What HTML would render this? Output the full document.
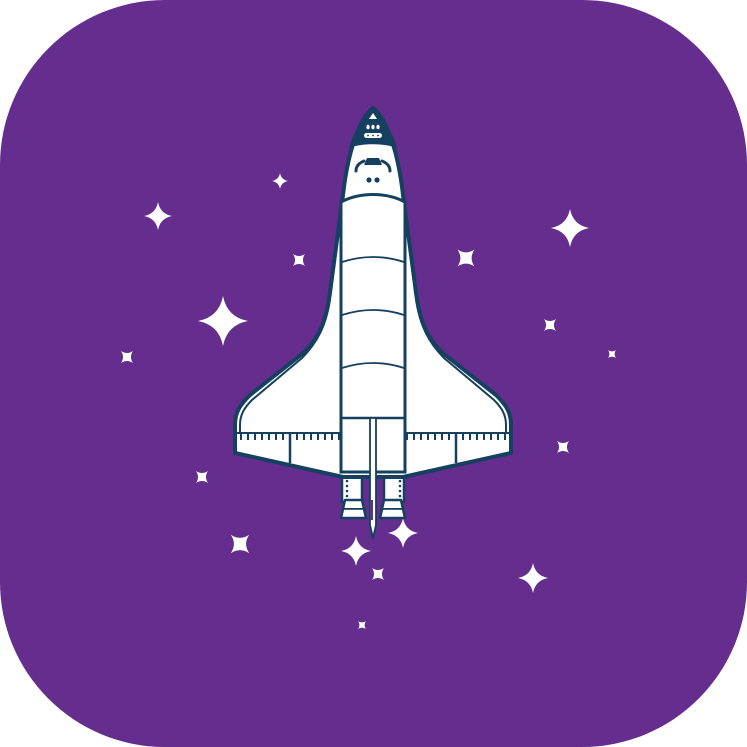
<!DOCTYPE html>
<html><head><style>html,body{margin:0;padding:0;background:#fff}svg{display:block}</style></head>
<body>
<svg width="747" height="747" viewBox="0 0 747 747" xmlns="http://www.w3.org/2000/svg">
<defs>
<path id="st" d="M0,-10 Q1.6,-1.6 10,0 Q1.6,1.6 0,10 Q-1.6,1.6 -10,0 Q-1.6,-1.6 0,-10Z" fill="#fff"/>
</defs>
<rect x="0" y="0" width="747" height="747" rx="165" fill="#652D8E"/>
<!-- stars -->
<use href="#st" transform="translate(280,181) scale(0.8)"/>
<use href="#st" transform="translate(158,216) scale(1.4)"/>
<use href="#st" transform="translate(570,228) scale(1.9)"/>
<use href="#st" transform="translate(299,260) rotate(45) scale(0.85)"/>
<use href="#st" transform="translate(466,258) rotate(45) scale(1.2)"/>
<use href="#st" transform="translate(223,321) scale(2.5)"/>
<use href="#st" transform="translate(550,325) rotate(45) scale(0.85)"/>
<use href="#st" transform="translate(127,357) rotate(45) scale(0.85)"/>
<use href="#st" transform="translate(612,354) rotate(45) scale(0.55)"/>
<use href="#st" transform="translate(563,447) rotate(45) scale(0.85)"/>
<use href="#st" transform="translate(202,477) rotate(45) scale(0.85)"/>
<use href="#st" transform="translate(240,544) rotate(45) scale(1.3)"/>
<use href="#st" transform="translate(356,551) scale(1.5)"/>
<use href="#st" transform="translate(403,533) scale(1.5)"/>
<use href="#st" transform="translate(378,574) rotate(45) scale(0.85)"/>
<use href="#st" transform="translate(533,578) scale(1.5)"/>
<use href="#st" transform="translate(362,625) rotate(45) scale(0.55)"/>

<g stroke="#16405F" stroke-width="3.5" stroke-linejoin="round" fill="#fff">
<!-- tail fin -->
<path d="M370,420 L376,420 L376,525 L373,538 L370,525Z" stroke-width="2"/>
<!-- engines -->
<rect x="342" y="470" width="20" height="32" stroke-width="2.5"/>
<rect x="384" y="470" width="20" height="32" stroke-width="2.5"/>
<path d="M345,500 L362,500 L366,518 L341,518Z" stroke-width="2.5"/>
<path d="M384,500 L401,500 L405,518 L380,518Z" stroke-width="2.5"/>
<!-- wings + body outline -->
<path d="M373,108 C360,118 348,150 343,195 L331,285 C327,320 320,338 302,354 L250,395 C240,405 235,412 235,425 L235,453 L343,477 L403,477 L511,453 L511,425 C511,412 506,405 496,395 L444,354 C426,338 419,320 415,285 L403,195 C398,150 386,118 373,108Z" stroke-width="4"/>
</g>
<g fill="none" stroke="#16405F" stroke-width="2">
<!-- inner leading-edge lines -->
<path d="M330,300 C326,325 318,342 302,358 L252,400 C244,408 240,415 240,425 L240,433"/>
<path d="M416,300 C420,325 428,342 444,358 L494,400 C502,408 506,415 506,425 L506,433"/>
<!-- elevon lines -->
<path d="M235,433 L343,433 M403,433 L511,433"/>
<path d="M290,433 L290,463 M456,433 L456,463" stroke-width="2.5"/>
<path d="M241,433v7M248,433v7M255,433v7M262,433v7M269,433v7M276,433v7M283,433v7M297,433v7M304,433v7M311,433v7M318,433v7M325,433v7M332,433v7M339,433v7"/>
<path d="M407,433v7M414,433v7M421,433v7M428,433v7M435,433v7M442,433v7M449,433v7M463,433v7M470,433v7M477,433v7M484,433v7M491,433v7M498,433v7M505,433v7"/>
</g>
<g stroke="#16405F" fill="#fff" stroke-width="3">
<!-- payload bay -->
<path d="M341,202 C360,192 386,192 405,202 L405,472 L341,472Z"/>
<path d="M341,418 L405,418" fill="none" stroke-width="2.5"/>
<path d="M342,262 Q373,252 404,262 M342,315 Q373,305 404,315 M342,368 Q373,358 404,368" fill="none" stroke-width="1.8"/>
</g>
<!-- fin over bay bottom -->
<path d="M370,418 L376,418 L376,525 L373,538 L370,525Z" fill="#fff" stroke="#16405F" stroke-width="1.8"/>
<!-- engine details -->
<g fill="#16405F">
<circle cx="347" cy="481" r="1.3"/><circle cx="347" cy="486" r="1.3"/><circle cx="347" cy="491" r="1.3"/><circle cx="347" cy="496" r="1.3"/>
<circle cx="400" cy="481" r="1.3"/><circle cx="400" cy="486" r="1.3"/><circle cx="400" cy="491" r="1.3"/><circle cx="400" cy="496" r="1.3"/>
<rect x="342" y="508" width="24" height="1.8"/><rect x="380" y="508" width="24" height="1.8"/>
<path d="M371,500 L373,500 L373,520 L371,520Z" fill="#652D8E"/>
</g>
<!-- nose cap -->
<path d="M373,110 C362,119 352,135 349,148 C360,143 386,143 397,148 C394,135 384,119 373,110Z" fill="#16405F"/>
<path d="M373,113 L377,119 L369,119Z" fill="#fff"/>
<g fill="#fff"><ellipse cx="368" cy="127" rx="1.6" ry="2.3"/><ellipse cx="373" cy="127" rx="1.6" ry="2.3"/><ellipse cx="378" cy="127" rx="1.6" ry="2.3"/>
<rect x="364" y="133" width="18" height="5" rx="2.5"/></g>
<g fill="#16405F"><circle cx="368" cy="135.5" r="0.9"/><circle cx="373" cy="135.5" r="0.9"/><circle cx="378" cy="135.5" r="0.9"/>
<path d="M367,158 L379,158 L382,165 L364,165Z"/>
<path d="M364,161 C359,163 356,166 356,171" stroke="#16405F" stroke-width="3" fill="none" stroke-linecap="round"/>
<path d="M382,161 C387,163 390,166 390,171" stroke="#16405F" stroke-width="3" fill="none" stroke-linecap="round"/>
<circle cx="369" cy="180" r="2.6"/><circle cx="377" cy="180" r="2.6"/></g>
</svg>
</body></html>
